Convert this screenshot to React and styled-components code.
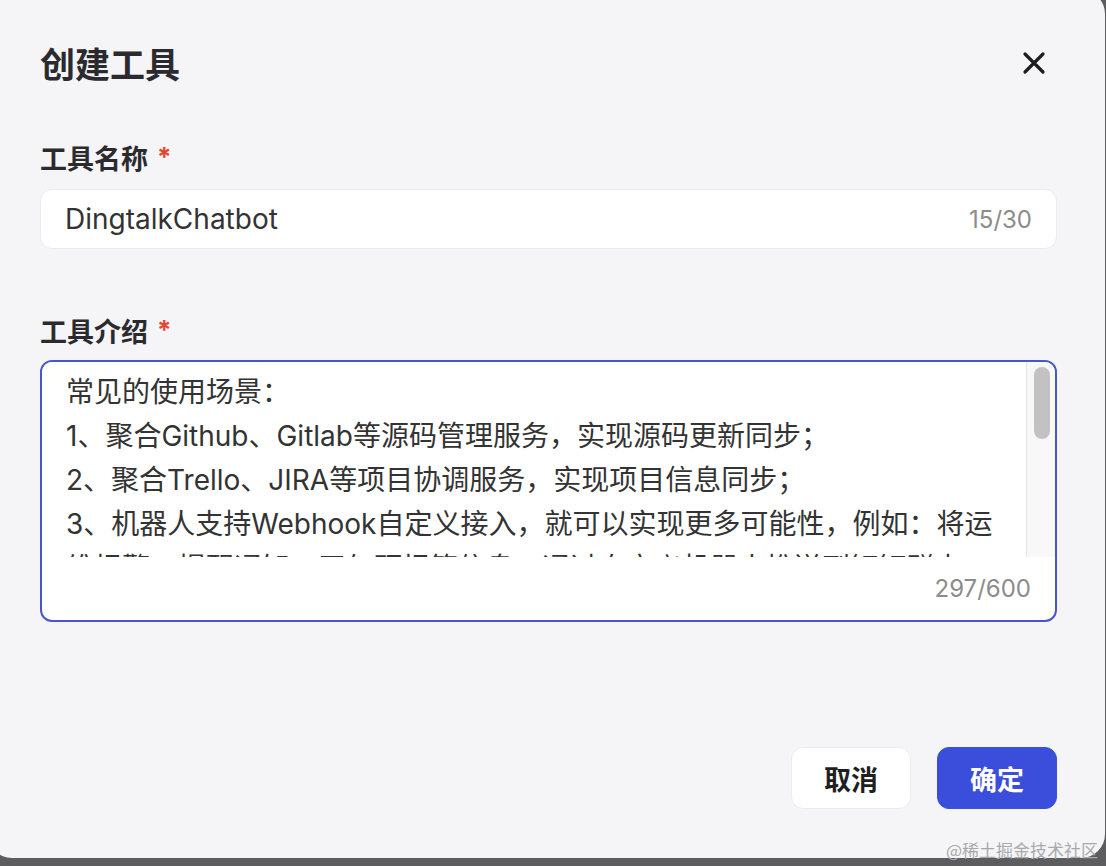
import React from 'react';
import styled, { createGlobalStyle } from 'styled-components';

const Global = createGlobalStyle`
  html, body { margin: 0; padding: 0; }
  body {
    background: #5d5d5f;
    font-family: Inter, "Noto Sans CJK SC", sans-serif;
    overflow: hidden;
  }
  * { box-sizing: border-box; }
`;

const Page = styled.div`
  position: relative;
  width: 1106px;
  height: 866px;
  overflow: hidden;
`;

const Modal = styled.section`
  width: 1117px;
  height: 868px;
  margin: -10px 0 0 -12px;
  background: #f5f5f7;
  border-radius: 24px;
  padding: 51px 48px 49px 52px;
  display: flex;
  flex-direction: column;
`;

const Header = styled.header`
  height: 44px;
  display: flex;
  align-items: center;
  justify-content: space-between;
`;

const Title = styled.h2`
  margin: 0;
  font-size: 35px;
  line-height: 44px;
  font-weight: 700;
  color: #2b2b2f;
  font-family: "Noto Sans CJK SC", sans-serif;
`;

const CloseButton = styled.button`
  width: 46px;
  height: 46px;
  border: none;
  background: transparent;
  padding: 0;
  display: flex;
  align-items: center;
  justify-content: center;
  cursor: pointer;
  color: #1d1d1f;
`;

const Label = styled.label`
  display: flex;
  align-items: center;
  margin-top: ${p => p.$top}px;
  margin-bottom: ${p => p.$bottom}px;
  height: 36px;
  font-size: 27px;
  font-weight: 700;
  color: #2b2b2f;
  font-family: "Noto Sans CJK SC", sans-serif;
`;

const Required = styled.span`
  color: #e8432d;
  font-size: 26px;
  font-weight: 700;
  margin-left: 9px;
  transform: translateY(-1px);
  font-family: Inter, sans-serif;
`;

const InputBox = styled.div`
  height: 60px;
  background: #fff;
  border: 1px solid #ebebee;
  border-radius: 12px;
  display: flex;
  align-items: center;
  padding: 0 24px;
  gap: 12px;
`;

const TextInput = styled.input`
  flex: 1;
  min-width: 0;
  border: none;
  outline: none;
  background: transparent;
  padding: 0;
  font-family: Inter, "Noto Sans CJK SC", sans-serif;
  font-size: 28px;
  color: #333;
`;

const Counter = styled.span`
  font-size: 24px;
  color: #8c8c8c;
  font-family: Inter, sans-serif;
`;

const AreaBox = styled.div`
  height: 262px;
  background: #fff;
  border: 2px solid #4557c9;
  border-radius: 12px;
  display: flex;
  flex-direction: column;
  overflow: hidden;
`;

const AreaBody = styled.div`
  height: 195px;
  flex: none;
  display: flex;
`;

const TextArea = styled.textarea`
  flex: 1;
  min-width: 0;
  height: 100%;
  border: none;
  outline: none;
  resize: none;
  padding: 8px 24px 0 24px;
  margin: 0;
  font-family: Inter, "Noto Sans CJK SC", sans-serif;
  font-size: 28px;
  line-height: 44px;
  color: #333;
  background: #fff;
  overflow: hidden;
`;

const ScrollTrack = styled.div`
  width: 29px;
  flex: none;
  background: #f8f8f8;
  border-left: 1px solid #e6e6e6;
  padding: 5px 5px 0 7px;
`;

const ScrollThumb = styled.div`
  height: 72px;
  border-radius: 8px;
  background: #c2c2c2;
`;

const AreaFooter = styled.div`
  flex: 1;
  display: flex;
  align-items: center;
  justify-content: flex-end;
  padding: 0 24px;
`;

const Footer = styled.footer`
  margin-top: auto;
  display: flex;
  justify-content: flex-end;
  gap: 26px;
`;

const Button = styled.button`
  width: 120px;
  height: 62px;
  border-radius: 12px;
  border: 1px solid ${p => (p.$primary ? '#3b4ddb' : '#ececef')};
  background: ${p => (p.$primary ? '#3b4ddb' : '#ffffff')};
  color: ${p => (p.$primary ? '#ffffff' : '#1f1f22')};
  font-family: "Noto Sans CJK SC", sans-serif;
  font-size: 27px;
  font-weight: 700;
  cursor: pointer;
  padding: 0;
`;

const Watermark = styled.span`
  position: absolute;
  right: 8px;
  bottom: 6px;
  font-size: 17px;
  line-height: 20px;
  color: #a9a9ab;
  font-family: "Noto Sans CJK SC", sans-serif;
  pointer-events: none;
`;

const description =
  '常见的使用场景：\n' +
  '1、聚合Github、Gitlab等源码管理服务，实现源码更新同步；\n' +
  '2、聚合Trello、JIRA等项目协调服务，实现项目信息同步；\n' +
  '3、机器人支持Webhook自定义接入，就可以实现更多可能性，例如：将运\n' +
  '维报警、提醒通知、天气预报等信息，通过自定义机器人推送到钉钉群中，让团队成员第一时间获取关键信息，及时处理线上问题；\n' +
  '4、支持发送文本、链接、Markdown、ActionCard、FeedCard等多种消息类型；\n' +
  '5、支持@指定群成员或@所有人，确保重要消息能够及时触达相关人员；\n' +
  '6、支持加签、自定义关键词、IP地址段等多种安全设置方式，保障消息发送的安全性。';

function CloseIcon() {
  return (
    <svg width="24" height="24" viewBox="0 0 24 24" fill="none">
      <path d="M3 3L21 21M21 3L3 21" stroke="currentColor" strokeWidth="3.2" strokeLinecap="round" />
    </svg>
  );
}

export default function App() {
  return (
    <Page>
      <Global />
      <Modal>
        <Header>
          <Title>创建工具</Title>
          <CloseButton aria-label="关闭">
            <CloseIcon />
          </CloseButton>
        </Header>

        <Label $top={54} $bottom={14}>
          工具名称<Required>*</Required>
        </Label>
        <InputBox>
          <TextInput defaultValue="DingtalkChatbot" />
          <Counter>15/30</Counter>
        </InputBox>

        <Label $top={63} $bottom={12}>
          工具介绍<Required>*</Required>
        </Label>
        <AreaBox>
          <AreaBody>
            <TextArea defaultValue={description} />
            <ScrollTrack>
              <ScrollThumb />
            </ScrollTrack>
          </AreaBody>
          <AreaFooter>
            <Counter>297/600</Counter>
          </AreaFooter>
        </AreaBox>

        <Footer>
          <Button>取消</Button>
          <Button $primary>确定</Button>
        </Footer>
      </Modal>
      <Watermark>@稀土掘金技术社区</Watermark>
    </Page>
  );
}
